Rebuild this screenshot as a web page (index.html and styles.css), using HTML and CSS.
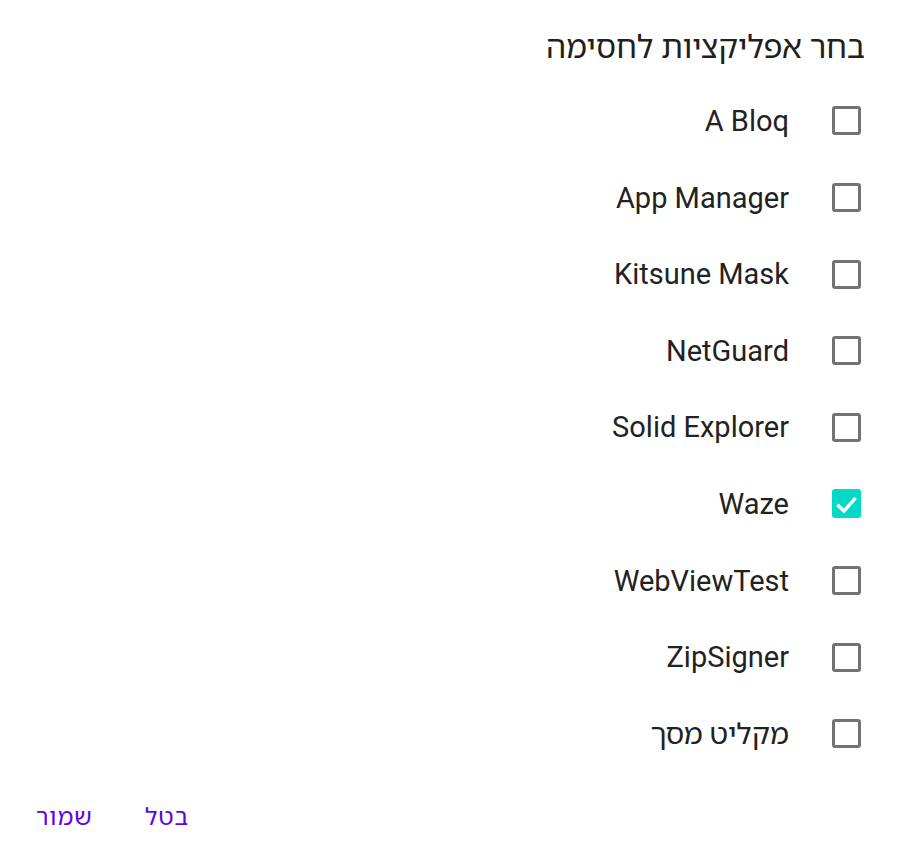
FILE: index.html
```html
<!DOCTYPE html>
<html lang="he" dir="rtl">
<head>
<meta charset="utf-8">
<link rel="stylesheet" href="styles.css">
</head>
<body>
<div class="dialog">
  <h1 class="title">בחר אפליקציות לחסימה</h1>
  <ul class="list">
    <li class="row"><span class="box"></span><span class="label">A Bloq</span></li>
    <li class="row"><span class="box"></span><span class="label">App Manager</span></li>
    <li class="row"><span class="box"></span><span class="label">Kitsune Mask</span></li>
    <li class="row"><span class="box"></span><span class="label">NetGuard</span></li>
    <li class="row"><span class="box"></span><span class="label">Solid Explorer</span></li>
    <li class="row"><span class="box checked"><svg viewBox="0 0 23 23" width="23" height="23"><path d="M2.3 12.8l6.6 6.3L20.6 5.8" fill="none" stroke="#fff" stroke-width="3.4" stroke-linecap="butt" stroke-linejoin="miter"/></svg></span><span class="label">Waze</span></li>
    <li class="row"><span class="box"></span><span class="label">WebViewTest</span></li>
    <li class="row"><span class="box"></span><span class="label">ZipSigner</span></li>
    <li class="row"><span class="box"></span><span class="label">מקליט מסך</span></li>
  </ul>
  <div class="actions">
    <button class="btn">בטל</button>
    <button class="btn">שמור</button>
  </div>
</div>
</body>
</html>
```

FILE: styles.css
```css
html, body {
  margin: 0;
  padding: 0;
  background: #fff;
}
body {
  font-family: Roboto, "Noto Sans Hebrew", "Open Sans", sans-serif;
  color: #212121;
}
.dialog {
  width: 901px;
  height: 857px;
  box-sizing: border-box;
  padding: 26px 36px 0 36px;
}
.title {
  margin: 0;
  font-size: 31.5px;
  font-weight: 400;
  line-height: 44px;
  color: #202020;
}
.list {
  list-style: none;
  margin: 12.7px 0 0 0;
  padding: 0;
}
.row {
  display: flex;
  align-items: center;
  height: 76.6px;
  padding-right: 4px;
}
.box {
  width: 29px;
  height: 29px;
  box-sizing: border-box;
  border: 3px solid #737373;
  border-radius: 3px;
  display: flex;
  align-items: center;
  justify-content: center;
  flex: none;
}
.box.checked {
  background: #03d9c5;
  border-color: #03d9c5;
}
.label {
  margin-right: 43px;
  font-size: 29px;
  line-height: 36px;
  color: #222;
}
.actions {
  display: flex;
  justify-content: flex-end;
  gap: 52px;
  margin-top: 29px;
}
.btn {
  border: 0;
  background: none;
  padding: 0;
  font-family: inherit;
  font-size: 24px;
  letter-spacing: 1px;
  color: #6200ee;
  line-height: 32px;
}
```
